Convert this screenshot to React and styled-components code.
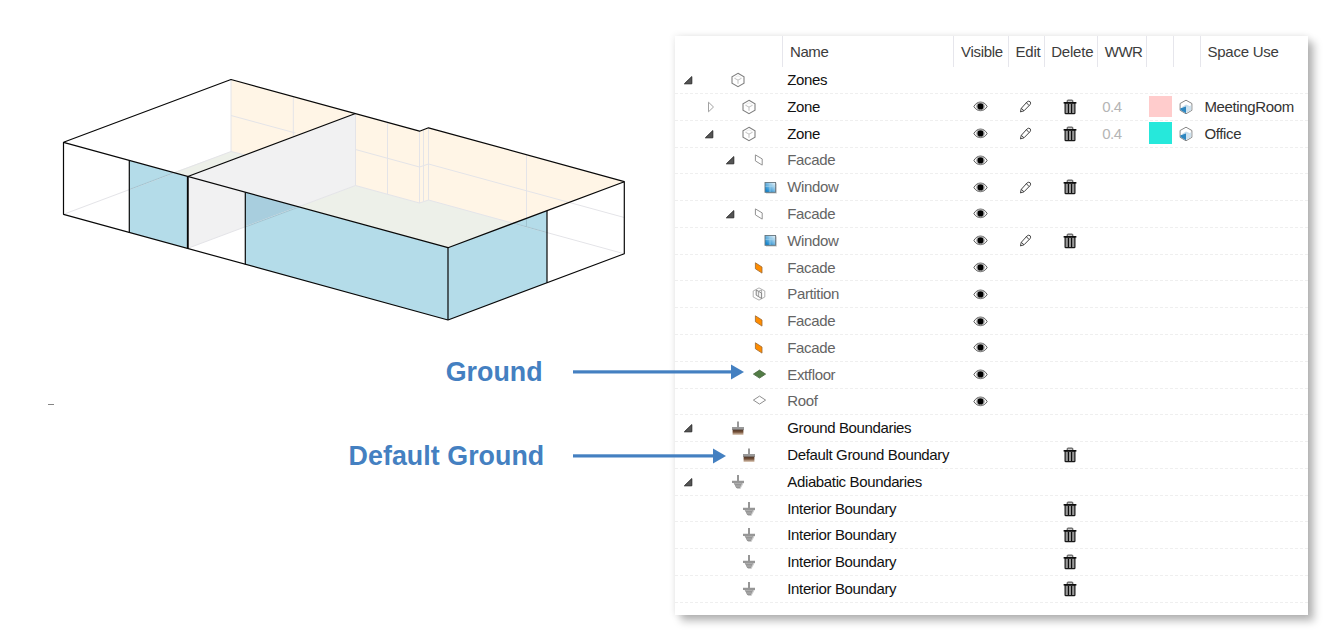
import React from "react";
import styled, { createGlobalStyle } from "styled-components";

const GlobalStyle = createGlobalStyle`
  * { box-sizing: border-box; }
  body { margin: 0; background: #fff; overflow: hidden; font-family: "Liberation Sans", Arial, sans-serif; }
  svg { display: block; flex: none; }
`;

const Page = styled.main`
  display: flex;
  width: 1338px;
  height: 639px;
  overflow: hidden;
`;

const Overview = styled.section`
  position: relative;
  z-index: 1;
  display: flex;
  flex: none;
  flex-direction: column;
  width: 674.7px;
  padding-top: 60px;
`;

const Callout = styled.div`
  display: flex;
  align-items: center;
  height: 40px;
`;

const CalloutLabel = styled.span`
  flex: none;
  width: ${(p) => p.$width}px;
  text-align: right;
  white-space: nowrap;
  color: #4480c1;
  font-size: 26.8px;
  font-weight: 700;
  letter-spacing: 0.05px;
`;

const ArrowSlot = styled.span`
  flex: none;
  margin-left: ${(p) => p.$gap}px;
`;

const Mark = styled.div`
  width: 6px;
  height: 1px;
  margin: 12px 0 31px 48px;
  background: #858585;
`;

const Panel = styled.section`
  flex: none;
  width: 633.3px;
  height: 579px;
  margin-top: 36px;
  background: #fff;
  box-shadow: 6px 6px 8px rgba(0, 0, 0, 0.27), 0 0 7px rgba(0, 0, 0, 0.1);
`;

const columns = "107.8px 171px 55px 35.2px 53.8px 49px 26.7px 26.8px 1fr";

const HeaderRow = styled.div`
  display: grid;
  grid-template-columns: ${columns};
  height: 31.2px;
`;

const HeaderCell = styled.div`
  display: flex;
  align-items: center;
  padding-left: ${(p) => p.$pad || 6.5}px;
  border-left: ${(p) => (p.$first ? "0" : "1px solid #e6e6ec")};
  color: #3c3c3c;
  font-size: 15px;
  letter-spacing: ${(p) => p.$tracking || -0.2}px;
  white-space: nowrap;
`;

const Row = styled.div`
  display: grid;
  grid-template-columns: ${columns};
  height: 26.79px;
  border-bottom: 1px dashed #efefef;
`;

const TreeCell = styled.div`
  display: flex;
  align-items: center;
  padding-left: ${(p) => p.$depth * 21.3}px;
`;

const CaretSlot = styled.span`
  display: flex;
  justify-content: flex-end;
  flex: none;
  width: 19.2px;
`;

const IconSlot = styled.span`
  display: flex;
  justify-content: center;
  flex: 1;
`;

const Cell = styled.div`
  display: flex;
  align-items: center;
  justify-content: ${(p) => (p.$center ? "center" : "flex-start")};
  min-width: 0;
  padding-left: ${(p) => p.$pad || 0}px;
  padding-right: ${(p) => (p.$center ? 1.8 : 0)}px;
  padding-bottom: ${(p) => (p.$center ? 0 : 1)}px;
  color: ${(p) => p.$color || "#111"};
  font-size: 15px;
  letter-spacing: ${(p) => p.$tracking || -0.36}px;
  white-space: nowrap;
`;

const Swatch = styled.span`
  width: 23px;
  height: 21.5px;
  background: ${(p) => p.$color};
`;

function Arrow({ length }) {
  return (
    <svg width={length} height="16" viewBox={`0 0 ${length} 16`} fill="#4480c1">
      <rect x="0" y="6.3" width={length - 12} height="3.2" />
      <path d={`M${length - 13} .5 L${length} 8 L${length - 13} 15.5Z`} />
    </svg>
  );
}

function Caret({ open }) {
  return open ? (
    <svg width="11" height="10" viewBox="0 0 11 10">
      <path d="M1.4 8.8 L8.8 1.6 V8.8Z" fill="#555" stroke="#303030" strokeWidth="1" />
    </svg>
  ) : (
    <svg width="8" height="12" viewBox="0 0 8 12">
      <path d="M1.5 1.2 L6.5 6 L1.5 10.8Z" fill="#fff" stroke="#a2a2a2" />
    </svg>
  );
}

function ZoneIcon() {
  return (
    <svg width="14" height="16" viewBox="0 0 14 16" fill="none">
      <path d="M7 1.3 L13 4.7 V11.3 L7 14.7 L1 11.3 V4.7Z" stroke="#808080" strokeWidth="1.1" />
      <path d="M3.4 6.2 L7 8.1 L10.6 6.2 M7 8.1 V11.8" stroke="#b8b8b8" strokeWidth=".9" />
      <path d="M4.2 5.3 L7 3.8 L9.8 5.3" stroke="#e2e2e2" strokeWidth=".8" />
    </svg>
  );
}

function FacadeIcon({ solid }) {
  return (
    <svg width="10" height="12" viewBox="0 0 10 12">
      <path
        d={solid ? "M1.4 .8 L8 5 V11.1 L1.4 6.8Z" : "M1.4 .9 L8.2 4.9 V11.1 L1.4 6.9Z"}
        fill={solid ? "#ff8c00" : "#fff"}
        stroke={solid ? "#9c6a34" : "#929292"}
        strokeWidth={solid ? 0.8 : 1}
      />
    </svg>
  );
}

function WindowIcon() {
  return (
    <svg width="13" height="13" viewBox="0 0 13 13">
      <defs>
        <linearGradient id="pane" x1="0" y1="1" x2="1" y2="0">
          <stop offset=".15" stopColor="#1687cf" />
          <stop offset=".9" stopColor="#d8ebf5" />
        </linearGradient>
      </defs>
      <rect x="2" y="2.4" width="10.9" height="10.2" fill="#cfcfcf" />
      <rect x="1" y="1.5" width="10.6" height="9.8" fill="url(#pane)" stroke="#66757e" strokeWidth=".9" />
      <path d="M6 2 V11 M1.5 5.3 H11.2" stroke="#a9d5ed" strokeWidth=".7" />
    </svg>
  );
}

function PartitionIcon() {
  return (
    <svg width="14" height="14" viewBox="0 0 14 14" fill="none">
      <path d="M7 .9 L12.8 4 V10 L7 13.1 L1.2 10 V4Z" stroke="#b0b0b0" />
      <path d="M4.2 3 L9.6 6 V11.5 L4.2 8.2Z" fill="#f2f2f2" stroke="#777" strokeWidth=".9" />
      <path d="M6.5 4.2 V9.4 M6.5 4.2 L9.6 3 V6" stroke="#999" strokeWidth=".8" />
    </svg>
  );
}

function FloorIcon({ solid }) {
  return (
    <svg width="15" height="12" viewBox="0 0 15 12">
      <path
        d="M1.4 5.1 L7.5 1.1 L13.6 5.1 L7.5 9.1Z"
        fill={solid ? "#527c46" : "#fff"}
        stroke={solid ? "#47643e" : "#8f8f8f"}
        strokeWidth={solid ? 0.8 : 1}
      />
    </svg>
  );
}

function GroundIcon() {
  return (
    <svg width="14" height="15" viewBox="0 0 14 15">
      <defs>
        <linearGradient id="soil" x1="0" y1="0" x2="0" y2="1">
          <stop offset="0" stopColor="#4c3528" />
          <stop offset=".45" stopColor="#765138" />
          <stop offset="1" stopColor="#e4d3c2" />
        </linearGradient>
      </defs>
      <path d="M6 .6 H8 V6 H13 V9 H1 V6 H6Z" fill="#999" />
      <rect x="1.6" y="8.6" width="10.8" height="5.4" fill="url(#soil)" />
    </svg>
  );
}

function EarthIcon() {
  return (
    <svg width="14" height="16" viewBox="0 0 14 16">
      <path d="M2.5 9 H12.7 L9.4 14.9 H6.2Z" fill="#ccc" />
      <path d="M6 1 H8 V6.8 H13 V8.9 H11.2 L8.8 13.9 H5.2 L2.8 8.9 H1 V6.8 H6Z" fill="#969696" />
      <path d="M3.4 9.4 H10.6 M4.6 12 H9.4" stroke="#bcbcbc" strokeWidth=".7" />
    </svg>
  );
}

function EyeIcon() {
  return (
    <svg width="15" height="11" viewBox="0 0 15 11">
      <path d="M.9 5.5 C3.9 -.4 11.1 -.4 14.1 5.5 C11.1 11.1 3.9 11.1 .9 5.5Z" fill="#fff" stroke="#555" strokeWidth="1" />
      <circle cx="7.5" cy="5.4" r="3.9" fill="#fff" stroke="#777" strokeWidth=".7" />
      <circle cx="7.5" cy="5.4" r="3.1" fill="#000" />
    </svg>
  );
}

function PencilIcon() {
  return (
    <svg width="13" height="13" viewBox="0 0 13 13" fill="none" stroke="#444" strokeWidth="1">
      <path d="M1.4 11.9 L2.3 8.3 L8.1 1.9 Q9.8 .5 11.2 1.8 Q12.2 3.1 11 4.7 L5 10.8Z" />
      <path d="M7.4 2.7 L10 5.5 M2.3 8.3 L5 10.8" />
    </svg>
  );
}

function TrashIcon() {
  return (
    <svg width="14" height="16" viewBox="0 0 14 16">
      <path d="M4.2 3 V1.7 Q4.2 1.1 5 1.1 H9 Q9.8 1.1 9.8 1.7 V3" fill="#ccc" stroke="#444" strokeWidth="1" />
      <path d="M2.1 4 H11.9 V14 Q11.9 14.7 11.2 14.7 H2.8 Q2.1 14.7 2.1 14Z" fill="#989898" stroke="#181818" strokeWidth="1.2" />
      <path d="M.6 3.8 H13.4" stroke="#080808" strokeWidth="1.5" />
      <path d="M5.4 5 V14 M8.6 5 V14" stroke="#080808" strokeWidth="1.1" />
    </svg>
  );
}

function SpaceIcon() {
  return (
    <svg width="14" height="16" viewBox="0 0 14 16">
      <path d="M7 1.2 L12.9 4.5 V11.3 L7 14.8 L1.1 11.3 V4.5Z" fill="#fff" stroke="#888" />
      <path d="M3 8 L7 5.6 L11.4 7.6 L7 9.5Z" fill="#c4dcec" />
      <path d="M1.4 9.2 L7 7.4 V14.2 L1.4 10.9Z" fill="#2d86c0" />
      <path d="M7 8.4 L12.3 6.3 V11 L7 14Z" fill="#cfe2ee" />
    </svg>
  );
}

const icons = {
  zone: <ZoneIcon />,
  facade: <FacadeIcon />,
  solidFacade: <FacadeIcon solid />,
  window: <WindowIcon />,
  partition: <PartitionIcon />,
  floor: <FloorIcon solid />,
  roof: <FloorIcon />,
  ground: <GroundIcon />,
  earth: <EarthIcon />,
};

const interior = { depth: 1, icon: "earth", name: "Interior Boundary", remove: true };
const part = (icon, name) => ({ depth: 2, icon, name, soft: true, visible: true });
const windowRow = { depth: 3, icon: "window", name: "Window", soft: true, visible: true, edit: true, remove: true };

const rows = [
  { depth: 0, caret: "open", icon: "zone", name: "Zones" },
  { depth: 1, caret: "closed", icon: "zone", name: "Zone", visible: true, edit: true, remove: true, wwr: "0.4", color: "#ffcccc", use: "MeetingRoom" },
  { depth: 1, caret: "open", icon: "zone", name: "Zone", visible: true, edit: true, remove: true, wwr: "0.4", color: "#26e8db", use: "Office" },
  { ...part("facade", "Facade"), caret: "open" },
  windowRow,
  { ...part("facade", "Facade"), caret: "open" },
  windowRow,
  part("solidFacade", "Facade"),
  part("partition", "Partition"),
  part("solidFacade", "Facade"),
  part("solidFacade", "Facade"),
  part("floor", "Extfloor"),
  part("roof", "Roof"),
  { depth: 0, caret: "open", icon: "ground", name: "Ground Boundaries" },
  { depth: 1, icon: "ground", name: "Default Ground Boundary", remove: true },
  { depth: 0, caret: "open", icon: "earth", name: "Adiabatic Boundaries" },
  interior,
  interior,
  interior,
  interior,
];

function TreeRow({ row }) {
  return (
    <Row>
      <TreeCell $depth={row.depth}>
        <CaretSlot>{row.caret && <Caret open={row.caret === "open"} />}</CaretSlot>
        <IconSlot>{icons[row.icon]}</IconSlot>
      </TreeCell>
      <Cell $pad={4.8} $color={row.soft ? "#646464" : "#111"}>{row.name}</Cell>
      <Cell $center>{row.visible && <EyeIcon />}</Cell>
      <Cell $center>{row.edit && <PencilIcon />}</Cell>
      <Cell $center>{row.remove && <TrashIcon />}</Cell>
      <Cell $pad={4.8} $color="#b5b5b5" $tracking={-0.5}>{row.wwr}</Cell>
      <Cell $pad={2.3}>{row.color && <Swatch $color={row.color} />}</Cell>
      <Cell $center>{row.use && <SpaceIcon />}</Cell>
      <Cell $pad={4.5} $color="#333">{row.use}</Cell>
    </Row>
  );
}

function Building() {
  return (
    <svg width="660" height="292" viewBox="0 60 660 292" fill="none">
      <path d="M231 79.5 L355.5 113.5 L245.5 155 L231 151.5Z M355.5 113.5 L419.5 131.2 L428.5 127.8 L624.3 181.7 L513 223 L428.5 200 L419.5 203 L355.5 185.5Z" fill="#fff5e6" />
      <path d="M231 151.5 L245.5 155 L187.8 176.5 L173 172.5Z M355.5 185.5 L419.5 203 L428.5 200 L513 223 L448 247.7 L299 206.8Z" fill="#edf0e9" />
      <path d="M187.8 176.5 L355.5 113.5 V185.5 L187.8 248.3Z" fill="#f1f1f2" />
      <path d="M129.3 160.5 L187.8 176.5 V248.5 L129.3 232.5Z M245.3 192.3 L448 247.7 V320 L245.3 264.4Z M448 247.7 L547 210.7 V282.7 L448 320Z" fill="#b4dce9" />
      <path d="M245.3 192.3 L299 207 L245.3 227Z" fill="#a8cede" />
      <g stroke="#e4e4e8" strokeWidth="1">
        <path d="M231 79.5 V151.5 L63.5 214.3 M231 151.5 L245.5 155 M231 115.5 L295.5 133 M293.3 96.5 V136.5" />
        <path d="M355.5 113.5 V185.5 L187.8 248.3 M355.5 185.5 L419.5 203 L428.5 200 L624.3 253.8 M355.5 149.5 L419.5 167 L428.5 164 L624.3 217.5" />
        <path d="M387.5 122.5 V194.5 M419.5 131.5 V203 M423.5 130 V201.5 M428.5 128 V200 M526.5 154.5 V227" />
      </g>
      <path d="M129.3 189.5 L173 173 M245.3 227 L299 207 M513 223 L547 232.5 M526.5 218.5 V227" stroke="#9fc4d1" strokeWidth="1" />
      <g stroke="#080808" strokeWidth="1.2" strokeLinejoin="round">
        <path d="M63.5 142.3 L231 79.5 L419.5 131.2 L428.5 127.8 L624.3 181.7 V253.8 L448 320 L63.5 214.3 V142.3 L448 247.7 L624.3 181.7" />
        <path d="M187.8 176.5 L355.5 113.5 M129.3 160.5 V232.5 M245.3 192.3 V264.4 M448 247.7 V320 M547 210.7 V282.7" />
        <path d="M187.8 176.5 V248.5" strokeWidth="1.9" />
      </g>
    </svg>
  );
}

export default function App() {
  return (
    <Page>
      <GlobalStyle />
      <Overview>
        <Building />
        <Callout>
          <CalloutLabel $width={542.7}>Ground</CalloutLabel>
          <ArrowSlot $gap={30.3}><Arrow length={171} /></ArrowSlot>
        </Callout>
        <Mark />
        <Callout>
          <CalloutLabel $width={544.3}>Default Ground</CalloutLabel>
          <ArrowSlot $gap={28.7}><Arrow length={153} /></ArrowSlot>
        </Callout>
      </Overview>
      <Panel>
        <HeaderRow>
          <HeaderCell $first />
          <HeaderCell $tracking={-0.4}>Name</HeaderCell>
          <HeaderCell $tracking={-0.3}>Visible</HeaderCell>
          <HeaderCell $pad={6}>Edit</HeaderCell>
          <HeaderCell>Delete</HeaderCell>
          <HeaderCell $pad={6.3} $tracking={-0.5}>WWR</HeaderCell>
          <HeaderCell />
          <HeaderCell />
          <HeaderCell $tracking={-0.25}>Space Use</HeaderCell>
        </HeaderRow>
        {rows.map((row, i) => (
          <TreeRow key={i} row={row} />
        ))}
      </Panel>
    </Page>
  );
}
